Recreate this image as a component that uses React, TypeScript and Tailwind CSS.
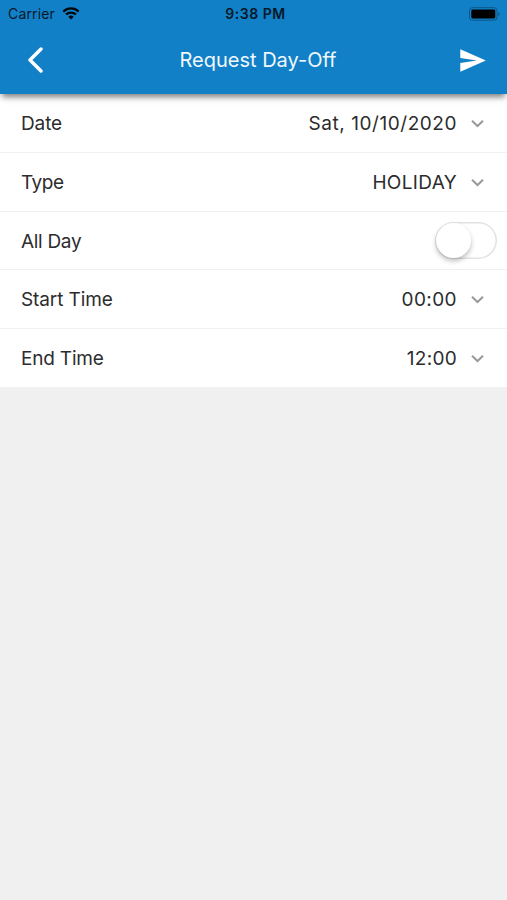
import type { ReactNode } from "react";

function Chevron() {
  return (
    <svg width="13" height="9" viewBox="0 0 13 9" fill="none" className="ml-[14px] shrink-0">
      <path d="M1 1.7L6.5 7L12 1.7" stroke="#999999" strokeWidth="2" />
    </svg>
  );
}

function Row({ label, labelClass, height, children }: { label: string; labelClass: string; height: string; children: ReactNode }) {
  return (
    <div className={`flex shrink-0 items-center justify-between border-b border-[#f1f1f1] bg-white pl-[21px] text-[19px] leading-6 text-[#2c2c2e] ${height}`}>
      <span className={`pt-[2px] ${labelClass}`}>{label}</span>
      {children}
    </div>
  );
}

function Value({ text, textClass }: { text: string; textClass: string }) {
  return (
    <div className="flex items-center pr-[23px]">
      <span className={`pt-[2px] ${textClass}`}>{text}</span>
      <Chevron />
    </div>
  );
}

export default function App() {
  return (
    <div className="flex h-[900px] w-[507px] flex-col overflow-hidden bg-[#f0f0f0] font-['Inter','Liberation_Sans',sans-serif]">
      <header className="relative z-10 flex h-[94px] shrink-0 flex-col bg-[#1180c6] shadow-[0_5px_6px_-2px_rgba(0,0,0,0.5)]">
        <div className="grid h-[27px] grid-cols-[1fr_auto_1fr] items-center pl-2 pr-[6px] text-[#06182a]">
          <div className="flex items-center text-[14px] leading-none">
            <span className="tracking-[0.15px]">Carrier</span>
            <svg width="18" height="13" viewBox="0 0 18 13" className="ml-[7px]" fill="none" stroke="#00080f">
              <path d="M1.3 4.6a11 11 0 0 1 15.4 0" strokeWidth="2.2" />
              <path d="M4 7.6a7.2 7.2 0 0 1 10 0" strokeWidth="2.1" />
              <path d="M9 12.4L6.3 9.8a4 4 0 0 1 5.4 0z" fill="#00080f" stroke="none" />
            </svg>
          </div>
          <span className="pl-[2px] text-[14px] font-semibold leading-none tracking-[0.5px]">9:38 PM</span>
          <svg width="33" height="14" viewBox="0 0 33 14" className="justify-self-end" fill="none">
            <rect x="1.5" y="0.7" width="27.5" height="12.5" rx="3" stroke="#0c5688" />
            <rect x="3.3" y="2.5" width="24" height="9" rx="1.4" fill="#000000" />
            <path d="M30.3 5v4c1.9-.6 1.9-3.4 0-4z" fill="#0c5688" />
          </svg>
        </div>
        <div className="grid h-[66px] grid-cols-[1fr_auto_1fr] items-center pl-[27px] pr-[21px] text-white">
          <svg width="17" height="26" viewBox="0 0 17 26" fill="none">
            <path d="M14 2L3 13L14 24" stroke="white" strokeWidth="3.4" strokeLinecap="round" strokeLinejoin="round" />
          </svg>
          <span className="pl-[3px] text-[20px] leading-6 text-[#f0f8fd]">Request Day-Off</span>
          <svg width="26" height="23" viewBox="0 0 26 23" className="justify-self-end" fill="white">
            <path d="M0.3 0.3L25.8 11.5L0.3 22.7V14L16.8 11.5L0.3 9z" />
          </svg>
        </div>
      </header>
      <main className="flex flex-col">
        <Row label="Date" labelClass="tracking-[-0.1px]" height="h-[59px]">
          <Value text="Sat, 10/10/2020" textClass="tracking-[0.55px]" />
        </Row>
        <Row label="Type" labelClass="tracking-[-0.5px]" height="h-[59px]">
          <Value text="HOLIDAY" textClass="tracking-[0.35px]" />
        </Row>
        <Row label="All Day" labelClass="tracking-[-0.3px]" height="h-[58px]">
          <div className="mr-[10px] flex h-[37px] w-[62px] items-center rounded-full bg-white shadow-[inset_0_0_0_1.5px_#e2e2e2]">
            <div className="ml-px h-[35px] w-[35px] shrink-0 rounded-full bg-white shadow-[0_3px_5px_rgba(0,0,0,0.25)]" />
          </div>
        </Row>
        <Row label="Start Time" labelClass="tracking-[-0.1px]" height="h-[59px]">
          <Value text="00:00" textClass="tracking-[0.4px]" />
        </Row>
        <Row label="End Time" labelClass="tracking-[-0.2px]" height="h-[59px]">
          <Value text="12:00" textClass="tracking-[0.3px]" />
        </Row>
      </main>
    </div>
  );
}
